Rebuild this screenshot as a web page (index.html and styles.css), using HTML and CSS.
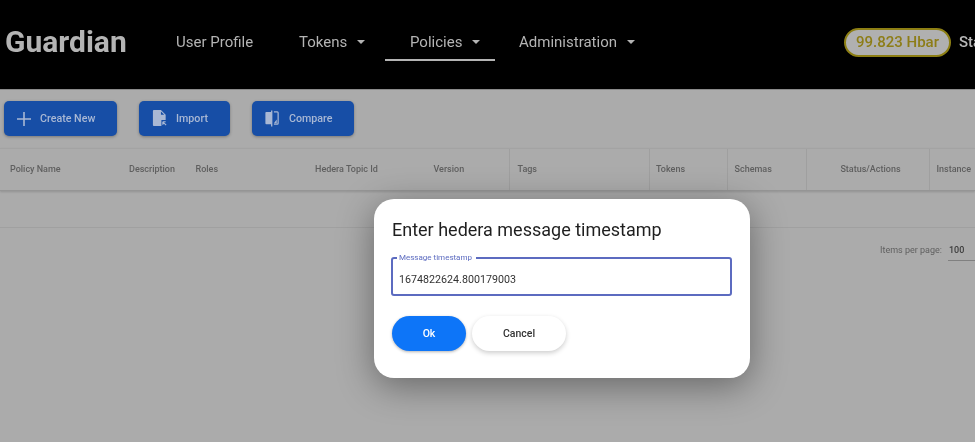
FILE: index.html
```html
<!DOCTYPE html>
<html lang="en">
<head>
<meta charset="utf-8">
<title>Guardian</title>
<link rel="stylesheet" href="styles.css">
</head>
<body>
<div class="page">
  <header class="topbar">
    <div class="brand">Guardian</div>
    <nav class="nav">
      <a class="nav-item nav-profile">User Profile</a>
      <a class="nav-item nav-tokens">Tokens<span class="caret"></span></a>
      <a class="nav-item nav-policies">Policies<span class="caret"></span></a>
      <a class="nav-item nav-admin">Administration<span class="caret"></span></a>
    </nav>
    <div class="balance">99.823 Hbar</div>
    <div class="user">Standard</div>
  </header>
  <main class="content">
    <div class="toolbar">
      <button class="action action-create">
        <svg class="icon" viewBox="0 0 16 16"><path d="M8 1v14M1 8h14" fill="none" stroke="currentColor" stroke-width="1.6"/></svg>
        Create New
      </button>
      <button class="action action-import">
        <svg class="icon" viewBox="0 0 16 18"><path d="M1.500 0H9l5 5v5.500H9.500V17h-8a1 1 0 0 1-1-1V1a1 1 0 0 1 1-1z M9 1.500V5h3.500z" fill="currentColor" fill-rule="evenodd"/><path d="M11 12.500l3.500 3.500M11 12.500v3M11 12.500h3" fill="none" stroke="currentColor" stroke-width="1.200"/></svg>
        Import
      </button>
      <button class="action action-compare">
        <svg class="icon" viewBox="0 0 16 18"><path d="M7 2H2a1 1 0 0 0-1 1v11a1 1 0 0 0 1 1h5zM7 .5h1.400V17.500H7z" fill="currentColor"/><path d="M10 2h3.500a1 1 0 0 1 1 1v11a1 1 0 0 1-1 1H10" fill="none" stroke="currentColor" stroke-width="1.300"/><path d="M4.500 5L2.500 9h4zM10 14l3-4v4z" fill="currentColor"/></svg>
        Compare
      </button>
    </div>
    <div class="table-head">
      <div class="th c-name">Policy Name</div>
      <div class="th c-desc">Description</div>
      <div class="th c-roles">Roles</div>
      <div class="th c-topic">Hedera Topic Id</div>
      <div class="th c-version">Version</div>
      <div class="th c-tags ruled">Tags</div>
      <div class="th c-tokens ruled">Tokens</div>
      <div class="th c-schemas ruled">Schemas</div>
      <div class="th c-status ruled">Status/Actions</div>
      <div class="th c-instance ruled">Instance</div>
    </div>
    <div class="table-empty"></div>
    <div class="paginator">
      <span class="pg-label">Items per page:</span>
      <span class="pg-select">100</span>
    </div>
  </main>
  <div class="dialog">
    <h2 class="dialog-title">Enter hedera message timestamp</h2>
    <div class="field">
      <span class="field-label">Message timestamp</span>
      <span class="field-value">1674822624.800179003</span>
    </div>
    <div class="dialog-actions">
      <button class="pill pill-ok">Ok</button>
      <button class="pill pill-cancel">Cancel</button>
    </div>
  </div>
</div>
</body>
</html>
```

FILE: styles.css
```css
* { box-sizing: border-box; }
html, body { margin: 0; padding: 0; height: 100%; overflow: hidden; background: #ababab; }
body { font-family: Roboto, "Liberation Sans", sans-serif; }
.page { position: relative; width: 975px; height: 442px; overflow: hidden; background: #ababab; filter: blur(.4px); }

.topbar { height: 90px; background: #000; display: flex; align-items: center; color: #bdbdbd; white-space: nowrap; border-bottom: 1px solid #8a8a8a; }
.brand { margin-left: 5px; width: 171px; flex: none; font-size: 30px; font-weight: 700; color: #b4b4b4; line-height: 1; position: relative; top: -3px; }
.nav { display: flex; width: 668px; flex: none; align-self: flex-start; padding-top: 23px; font-size: 15px; }
.nav-item { display: flex; align-items: center; height: 38px; color: #b4b4b4; }
.nav-profile { width: 123px; }
.nav-tokens { width: 86px; }
.nav-policies { width: 110px; padding: 2px 0 0 25px; border-bottom: 2px solid #b4b4b4; margin-right: 24px; }
.caret { display: inline-block; margin-left: 10px; width: 0; height: 0; border-left: 4px solid transparent; border-right: 4px solid transparent; border-top: 4px solid #b4b4b4; }
.balance { flex: none; width: 107px; height: 29px; position: relative; top: -2.500px; border: 2px solid #8d7f14; border-radius: 15px; background: #b0b0b0; color: #8d7d17; font-size: 15px; font-weight: 500; display: flex; align-items: center; justify-content: center; }
.user { margin-left: 8px; font-size: 15px; font-weight: 500; color: #b8b8b8; position: relative; top: -2.500px; }

.content { display: flex; flex-direction: column; }
.toolbar { display: flex; padding: 11px 0 0 4px; height: 58px; }
.action { height: 35px; border: 0; border-radius: 5px; background: #174ea6; color: #a9b8d4; font: 500 10.700px Roboto, sans-serif; display: flex; align-items: center; box-shadow: 0 1px 3px rgba(0,0,0,.3); padding: 0; }
.action-create { width: 113px; padding-left: 12px; gap: 8px; }
.action-import { width: 91px; margin-left: 22px; padding-left: 13px; gap: 8px; }
.action-compare { width: 102px; margin-left: 22px; padding-left: 12px; gap: 9px; }
.icon { width: 16px; height: 16px; flex: none; }
.action-import .icon, .action-compare .icon { height: 17px; }

.table-head { display: grid; grid-template-columns: 119px 67px 119px 119px 85px 140px 78px 79px 123px 46px; height: 43px; border-top: 1px solid #a3a3a3; border-bottom: 1px solid #959595; box-shadow: 0 1px 2px rgba(0,0,0,.15); }
.th { display: flex; align-items: center; padding-bottom: 1px; font-size: 9px; font-weight: 500; color: #5f5f5f; padding-left: 10px; white-space: nowrap; }
.ruled { border-left: 1px solid #9f9f9f; padding-left: 6.500px; }
.c-roles, .c-version { padding-left: 9.500px; }
.c-tags { padding-left: 7.500px; }
.c-tokens { padding-left: 6px; }
.c-status { justify-content: center; padding-left: 5px; }
.table-empty { height: 37px; border-bottom: 1px solid #a0a0a0; }
.paginator { display: flex; justify-content: flex-end; align-items: center; height: 44px; font-size: 9px; color: #606060; white-space: nowrap; }
.pg-label { margin-right: 6px; }
.pg-select { width: 27px; height: 20px; line-height: 18px; padding-left: 1px; margin-top: 1px; font-weight: 500; color: #3c3c3c; border-bottom: 1px solid #808080; }

.dialog { position: absolute; left: 374px; top: 199px; width: 376px; height: 179px; background: #fff; border-radius: 20px; padding: 19px 18px 0; box-shadow: 0 8px 36px rgba(0,0,0,.4); }
.dialog-title { margin: 0; font-size: 18px; font-weight: 400; color: #1f1f1f; line-height: 24px; }
.field { position: relative; margin: 15px 0 0 -1px; width: 341px; height: 39px; border: 2px solid #5c6bc0; border-radius: 3px; display: flex; align-items: center; padding: 5px 0 0 6px; }
.field-label { position: absolute; left: 4px; top: -6px; padding: 0 4px 0 2px; background: #fff; color: #5c6bc0; font-size: 8px; line-height: 10px; white-space: nowrap; }
.field-value { font-size: 10.700px; color: #333; }
.dialog-actions { display: flex; gap: 6px; margin-top: 20px; }
.pill { height: 35px; border: 0; border-radius: 18px; font: 500 10.500px Roboto, sans-serif; padding: 0; }
.pill-ok { width: 74px; background: #0d75f8; color: #fff; box-shadow: 0 1px 3px rgba(0,0,0,.3); }
.pill-cancel { width: 94px; background: #fff; color: #333; box-shadow: 0 2px 5px rgba(0,0,0,.2); }
```
